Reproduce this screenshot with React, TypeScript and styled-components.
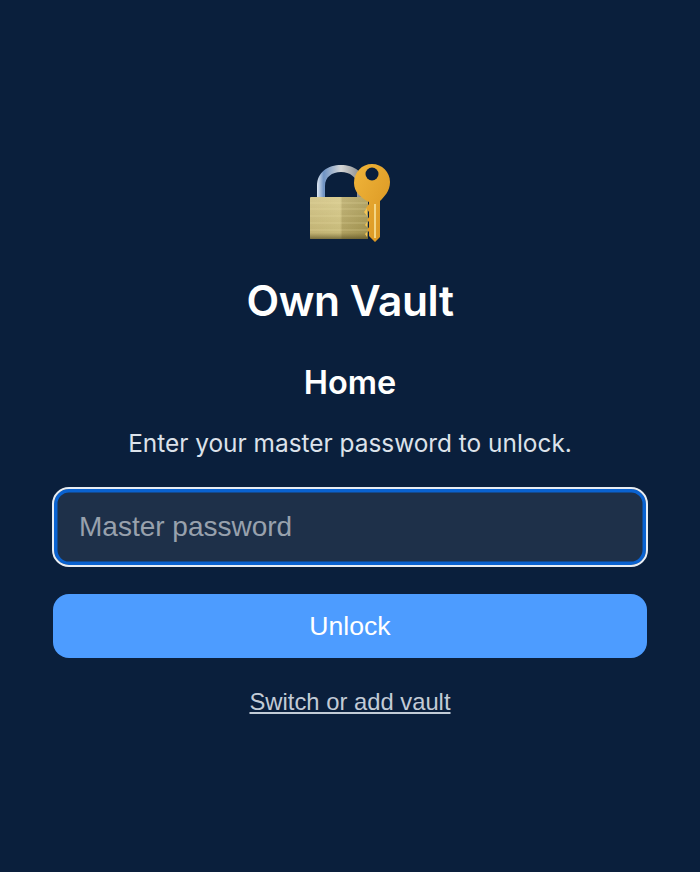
import React from 'react'
import styled, { createGlobalStyle } from 'styled-components'

const GlobalStyle = createGlobalStyle`
  html, body {
    margin: 0;
    padding: 0;
    background: #0a1f3c;
  }
`

const Page = styled.main`
  box-sizing: border-box;
  width: 100%;
  height: 872px;
  padding: 156px 52px 0;
  display: flex;
  flex-direction: column;
  align-items: center;
  background: #0a1f3c;
  font-family: Inter, "Liberation Sans", sans-serif;
  color: #fff;
`

const Logo = styled.svg`
  width: 90px;
  height: 92px;
  display: block;
`

const Title = styled.h1`
  margin: 27px 0 0;
  font-size: 42.5px;
  line-height: 52px;
  font-weight: 600;
  letter-spacing: -0.4px;
`

const VaultName = styled.h2`
  margin: 36px 0 0;
  font-size: 32.5px;
  line-height: 40px;
  font-weight: 600;
`

const Hint = styled.p`
  margin: 24px 0 0;
  font-size: 24.4px;
  line-height: 32px;
  color: #dce2ea;
`

const Form = styled.form`
  width: 100%;
  margin: 28px 0 0;
  display: flex;
  flex-direction: column;
  gap: 27px;
`

const PasswordInput = styled.input`
  box-sizing: border-box;
  width: 100%;
  height: 80px;
  padding: 0 25px;
  border: 2px solid #e8edf3;
  border-radius: 17px;
  outline: none;
  box-shadow: inset 0 0 0 3.5px #0a62d0;
  background: #1e3049;
  color: #fff;
  font-family: "Liberation Sans", sans-serif;
  font-size: 28px;

  &::placeholder {
    color: #98a1ad;
    opacity: 1;
  }
`

const UnlockButton = styled.button`
  height: 64px;
  margin: 0 1px;
  border: 0;
  border-radius: 16px;
  background: #4d9cff;
  color: #fff;
  font-family: "Liberation Sans", sans-serif;
  font-size: 26.6px;
`

const SwitchLink = styled.a`
  margin-top: 28px;
  color: #c2cbd6;
  font-family: "Liberation Sans", sans-serif;
  font-size: 23.8px;
  line-height: 32px;
  text-decoration: underline;
`

const LockKeyIcon = () => (
  <Logo viewBox="0 0 90 92">
    <defs>
      <linearGradient id="shackle" x1="0" x2="1" y1="0" y2="0">
        <stop offset="0" stopColor="#dfe8f2" />
        <stop offset="0.14" stopColor="#6f93c4" />
        <stop offset="0.5" stopColor="#d5d6d6" />
        <stop offset="1" stopColor="#77797a" />
      </linearGradient>
      <linearGradient id="body" x1="0" x2="1" y1="0" y2="0">
        <stop offset="0" stopColor="#cfc07f" />
        <stop offset="0.52" stopColor="#d6c886" />
        <stop offset="0.56" stopColor="#b9aa68" />
        <stop offset="1" stopColor="#a99a55" />
      </linearGradient>
      <linearGradient id="bodyShade" x1="0" x2="0" y1="0" y2="1">
        <stop offset="0" stopColor="#fff" stopOpacity=".12" />
        <stop offset="0.85" stopColor="#5a4f1e" stopOpacity=".12" />
        <stop offset="1" stopColor="#4c431a" stopOpacity=".65" />
      </linearGradient>
      <linearGradient id="key" x1="0" x2="1" y1="0" y2="1">
        <stop offset="0" stopColor="#f0b53a" />
        <stop offset="1" stopColor="#d7921f" />
      </linearGradient>
    </defs>
    <path d="M12 42V30C12 16 23 9 36 9s24 7 24 21v12h-8V30c0-9-7-14-16-14s-16 5-16 14v12z" fill="url(#shackle)" />
    <rect x="5" y="41" width="58" height="42" rx="1" fill="url(#body)" />
    <rect x="5" y="41" width="58" height="42" rx="1" fill="url(#bodyShade)" />
    <path d="M5 47h58M5 53h58M5 60h58M5 67h58M5 74h58" stroke="#eadfa6" strokeOpacity=".35" strokeWidth="1" />
    <path d="M49 27c0-11 8-19 18-19s18 8 18 18c0 9-6 15-10 19v36l-5 5-6-6v-4l-2-2 2-3v-5l-2-2 2-3v-5l-3-4 3-4V46c-8-4-15-10-15-19z" fill="url(#key)" />
    <path d="M62 52l-3 4 3 4zM62 66l-2 3 2 2zM62 76l-2 2 2 3z" fill="#f3c556" />
    <path d="M70 48v34" stroke="#f7dc8e" strokeWidth="1.8" />
    <circle cx="67" cy="18" r="6.5" fill="#0a1f3c" />
  </Logo>
)

export default function App() {
  return (
    <Page>
      <GlobalStyle />
      <LockKeyIcon />
      <Title>Own Vault</Title>
      <VaultName>Home</VaultName>
      <Hint>Enter your master password to unlock.</Hint>
      <Form onSubmit={(e) => e.preventDefault()}>
        <PasswordInput type="password" placeholder="Master password" />
        <UnlockButton type="submit">Unlock</UnlockButton>
      </Form>
      <SwitchLink href="#">Switch or add vault</SwitchLink>
    </Page>
  )
}
